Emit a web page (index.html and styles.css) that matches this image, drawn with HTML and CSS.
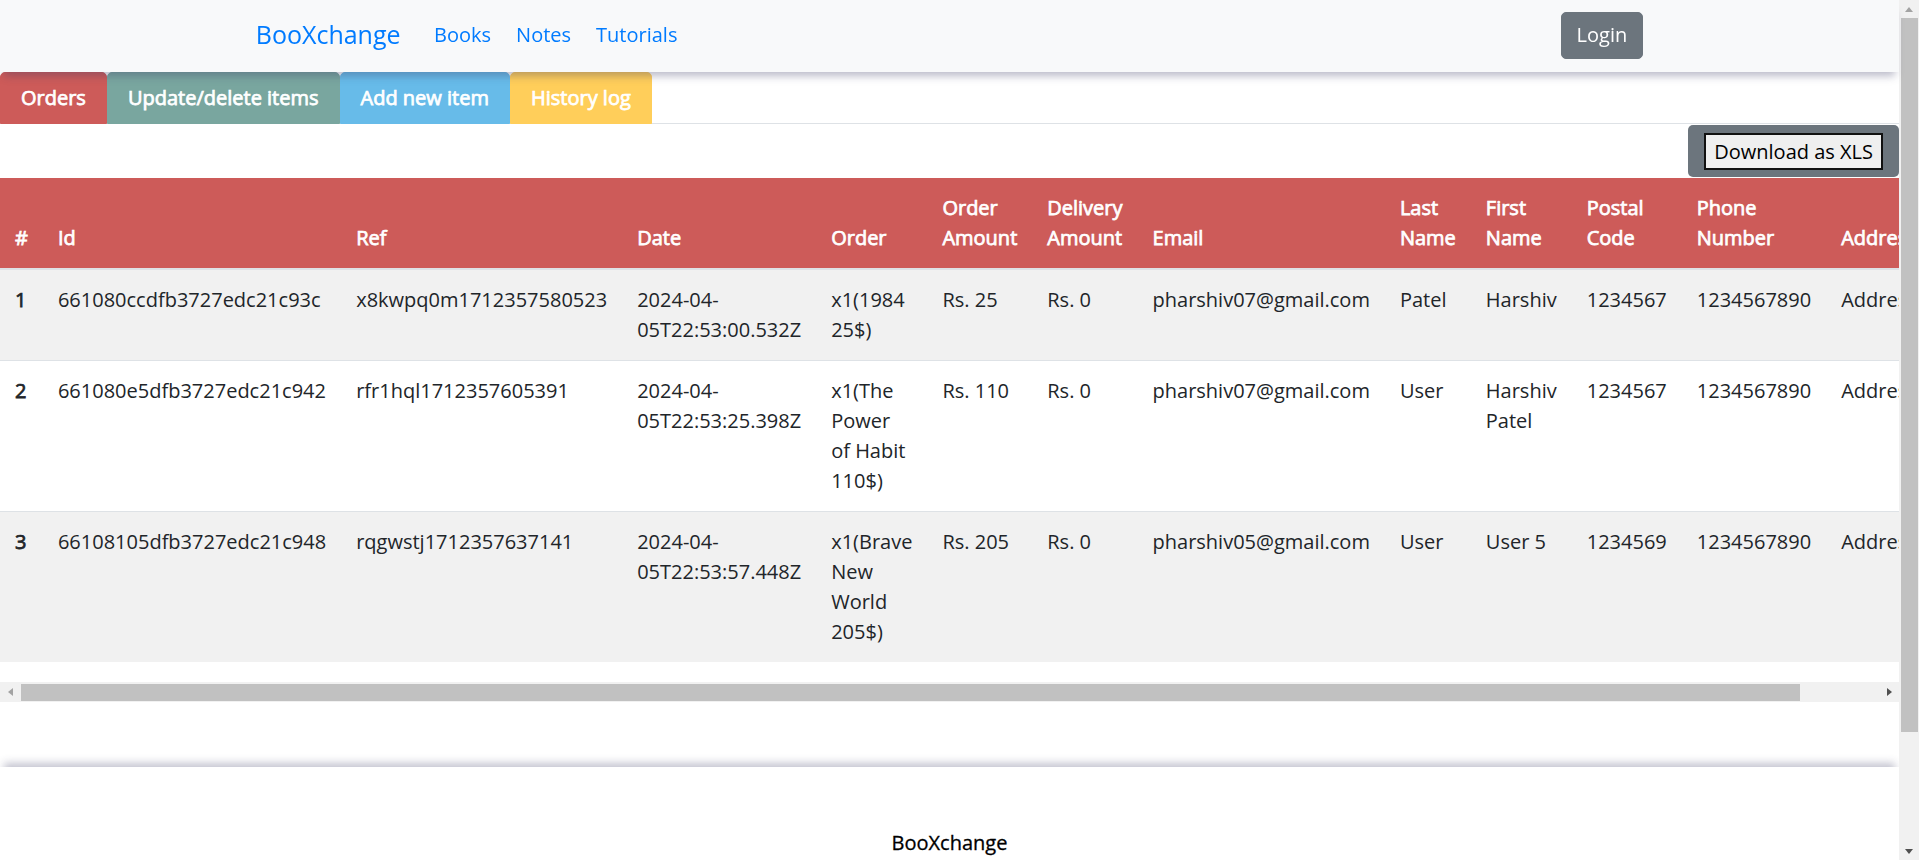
FILE: index.html
```html
<!DOCTYPE html>
<html lang="en">
<head>
<meta charset="utf-8">
<title>BooXchange - Admin</title>
<link rel="stylesheet" href="styles.css">
</head>
<body>
<div class="page">
  <nav class="navbar">
    <div class="nav-container">
      <a class="brand" href="#">BooXchange</a>
      <ul class="nav-links">
        <li><a href="#">Books</a></li>
        <li><a href="#">Notes</a></li>
        <li><a href="#">Tutorials</a></li>
      </ul>
      <button class="login-btn">Login</button>
    </div>
  </nav>

  <ul class="tabs">
    <li class="tab tab-orders">Orders</li>
    <li class="tab tab-update">Update/delete items</li>
    <li class="tab tab-add">Add new item</li>
    <li class="tab tab-history">History log</li>
  </ul>

  <div class="toolbar">
    <div class="dl-box"><button class="dl-btn">Download as XLS</button></div>
  </div>

  <div class="table-block">
    <div class="table-wrap">
      <table class="orders">
        <thead>
          <tr>
            <th>#</th>
            <th>Id</th>
            <th>Ref</th>
            <th>Date</th>
            <th>Order</th>
            <th>Order Amount</th>
            <th>Delivery Amount</th>
            <th>Email</th>
            <th>Last Name</th>
            <th>First Name</th>
            <th>Postal Code</th>
            <th>Phone Number</th>
            <th class="col-addr">Address</th>
          </tr>
        </thead>
        <tbody>
          <tr>
            <th>1</th>
            <td>661080ccdfb3727edc21c93c</td>
            <td>x8kwpq0m1712357580523</td>
            <td>2024-04-05T22:53:00.532Z</td>
            <td>x1(1984 25$)</td>
            <td>Rs. 25</td>
            <td>Rs. 0</td>
            <td>pharshiv07@gmail.com</td>
            <td>Patel</td>
            <td>Harshiv</td>
            <td>1234567</td>
            <td>1234567890</td>
            <td>Address</td>
          </tr>
          <tr>
            <th>2</th>
            <td>661080e5dfb3727edc21c942</td>
            <td>rfr1hql1712357605391</td>
            <td>2024-04-05T22:53:25.398Z</td>
            <td>x1(The Power of Habit 110$)</td>
            <td>Rs. 110</td>
            <td>Rs. 0</td>
            <td>pharshiv07@gmail.com</td>
            <td>User</td>
            <td>Harshiv Patel</td>
            <td>1234567</td>
            <td>1234567890</td>
            <td>Address</td>
          </tr>
          <tr>
            <th>3</th>
            <td>66108105dfb3727edc21c948</td>
            <td>rqgwstj1712357637141</td>
            <td>2024-04-05T22:53:57.448Z</td>
            <td>x1(Brave New World 205$)</td>
            <td>Rs. 205</td>
            <td>Rs. 0</td>
            <td>pharshiv05@gmail.com</td>
            <td>User</td>
            <td>User 5</td>
            <td>1234569</td>
            <td>1234567890</td>
            <td>Address</td>
          </tr>
        </tbody>
      </table>
    </div>
    <div class="hscroll" aria-hidden="true">
      <span class="sb-btn"><span class="tri tri-left"></span></span>
      <div class="hs-track"><span class="hs-thumb"></span></div>
      <span class="sb-btn"><span class="tri tri-right"></span></span>
    </div>
  </div>

  <footer class="footer">
    <p class="footer-brand">BooXchange</p>
  </footer>
</div>

<div class="vscroll" aria-hidden="true">
  <span class="vs-btn"><span class="tri tri-up"></span></span>
  <span class="vs-thumb"></span>
  <span class="vs-btn vs-btn-end"><span class="tri tri-down"></span></span>
</div>
</body>
</html>
```

FILE: styles.css
```css
* { box-sizing: border-box; }

html, body {
  margin: 0;
  padding: 0;
}

body {
  font-family: "Open Sans", "Noto Sans", sans-serif;
  font-size: 20px;
  line-height: 1.5;
  color: #212529;
  background: #fff;
}

.page {
  margin-right: 20px;
}

/* ---------- navbar ---------- */
.navbar {
  position: relative;
  z-index: 2;
  background: #f8f9fa;
  height: 72px;
  box-shadow: 0 8px 8px -4px rgba(60, 60, 100, 0.35);
}

.nav-container {
  width: 1425px;
  margin: 0 auto;
  padding: 0 18.75px 2px;
  height: 100%;
  display: flex;
  align-items: center;
}

.brand {
  font-size: 25px;
  line-height: 37.5px;
  color: #007bff;
  text-decoration: none;
  margin-right: 21px;
}

.nav-links {
  list-style: none;
  margin: 0;
  padding: 0;
  display: flex;
}

.nav-links a {
  display: block;
  padding: 0 12.5px;
  color: #007bff;
  text-decoration: none;
  line-height: 30px;
}

.login-btn {
  margin-left: auto;
  font-family: inherit;
  font-size: 20px;
  line-height: 30px;
  color: #fff;
  background: #6c757d;
  border: 1px solid #6c757d;
  border-radius: 5px;
  padding: 7.5px 15px;
}

/* ---------- tabs ---------- */
.tabs {
  list-style: none;
  margin: 0;
  padding: 0;
  display: flex;
  border-bottom: 1px solid #dee2e6;
}

.tab {
  padding: 10px 20px;
  line-height: 30px;
  border: 1px solid transparent;
  border-radius: 5px 5px 0 0;
  margin-bottom: -1px;
  color: #fff;
  font-weight: 400;
  -webkit-text-stroke: 0.75px #fff;
}

.tab-orders { background: #cd5b59; border-color: #cd5b59; }
.tab-update { background: #79a69f; border-color: #79a69f; }
.tab-add { background: #67bbe9; border-color: #67bbe9; }
.tab-history { background: #ffce5a; border-color: #ffce5a; }

/* ---------- toolbar ---------- */
.toolbar {
  display: flex;
  justify-content: flex-end;
  padding-top: 1px;
}

.dl-box {
  background: #6c757d;
  border-radius: 5px;
  padding: 8px 16px 7px 16px;
}

.dl-btn {
  display: block;
  font-family: inherit;
  font-size: 20px;
  line-height: 30px;
  color: #000;
  background: #efefef;
  border: 2px solid #111;
  border-radius: 0;
  padding: 1.5px 8px;
}

/* ---------- table ---------- */
.table-block {
  margin-top: 1px;
  margin-bottom: 65px;
}

.table-wrap {
  width: 100%;
  overflow: hidden;
}

.orders {
  width: 100%;
  border-collapse: collapse;
  margin-bottom: 20px;
}

.orders th,
.orders td {
  padding: 15px;
  vertical-align: top;
  text-align: left;
  border-top: 1px solid #dee2e6;
}

.orders thead th {
  vertical-align: bottom;
  background: #cd5b59;
  color: #fff;
  font-weight: 400;
  -webkit-text-stroke: 0.75px #fff;
  border-top: none;
  border-bottom: 2px solid #dee2e6;
}

.orders tbody th {
  font-weight: 400;
  -webkit-text-stroke: 0.75px #212529;
}

.orders tbody tr:nth-child(odd) {
  background: #f1f1f1;
}

.orders .col-addr {
  min-width: 158px;
}

/* ---------- fake scrollbars ---------- */
.hscroll {
  display: flex;
  height: 20px;
  background: #f1f1f1;
}

.sb-btn {
  width: 20px;
  flex: none;
  display: flex;
  align-items: center;
  justify-content: center;
}

.hs-track {
  flex: 1;
  padding: 2px 0 1px;
}

.hs-thumb {
  display: block;
  width: 1779px;
  height: 17px;
  margin-left: 1px;
  background: #c1c1c1;
}

.vscroll {
  position: fixed;
  top: 0;
  right: 0;
  width: 20px;
  height: 100vh;
  background: #f1f1f1;
  display: flex;
  flex-direction: column;
}

.vs-btn {
  height: 18px;
  flex: none;
  display: flex;
  align-items: center;
  justify-content: center;
}

.vs-btn-end {
  margin-top: auto;
}

.vs-thumb {
  display: block;
  height: 714px;
  margin: 0 1px 0 2px;
  background: #c1c1c1;
}

.tri {
  display: block;
  width: 0;
  height: 0;
}

.tri-up {
  border-left: 4.5px solid transparent;
  border-right: 4.5px solid transparent;
  border-bottom: 5px solid #a3a3a3;
}

.tri-down {
  border-left: 4.5px solid transparent;
  border-right: 4.5px solid transparent;
  border-top: 5px solid #505050;
}

.tri-left {
  border-top: 4.5px solid transparent;
  border-bottom: 4.5px solid transparent;
  border-right: 5px solid #a3a3a3;
}

.tri-right {
  border-top: 4.5px solid transparent;
  border-bottom: 4.5px solid transparent;
  border-left: 5px solid #505050;
}

/* ---------- footer ---------- */
.footer {
  box-shadow: 0 -8px 8px -4px rgba(60, 60, 100, 0.3);
  padding: 61px 0 135px;
  text-align: center;
}

.footer-brand {
  margin: 0;
  color: #000;
  line-height: 30px;
  -webkit-text-stroke: 0.3px #000;
}
```
